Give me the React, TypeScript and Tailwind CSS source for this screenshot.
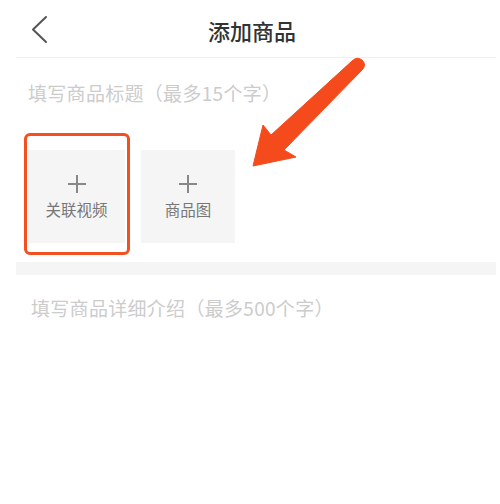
import React from "react";

export default function App() {
  return (
    <div
      className="relative w-[500px] h-[504px] bg-white overflow-hidden"
      style={{ fontFamily: '"Noto Sans CJK SC", "Noto Sans", sans-serif' }}
    >
      {/* header */}
      <div className="relative h-[57px] flex items-center justify-center pt-[3px]">
        <svg
          className="absolute left-[30px] top-[15px]"
          width="20"
          height="30"
          viewBox="0 0 20 30"
          fill="none"
        >
          <polyline
            points="16,2 3,14.5 16,27"
            stroke="#555"
            strokeWidth="2"
            strokeLinecap="round"
            strokeLinejoin="round"
          />
        </svg>
        <div className="pl-[4px] text-[22px] leading-[30px] font-medium text-[#333]">添加商品</div>
      </div>
      <div className="ml-[16px] w-[480px] h-px bg-[#f0f0f0]" />

      {/* title placeholder */}
      <div className="pl-[28px] pt-[22px] text-[19px] tracking-[0.3px] leading-[26px] text-[#cccccc]">
        填写商品标题（最多15个字）
      </div>

      {/* upload boxes */}
      <div className="flex gap-[16px] pl-[28px] mt-[44px]">
        <div className="w-[97px] h-[93px] bg-[#f5f5f5] flex flex-col items-center justify-center">
          <Plus />
          <div className="mt-[5px] text-[15.5px] leading-[20px] text-[#777]">关联视频</div>
        </div>
        <div className="w-[94px] h-[93px] bg-[#f5f5f5] flex flex-col items-center justify-center">
          <Plus />
          <div className="mt-[5px] text-[15.5px] leading-[20px] text-[#777]">商品图</div>
        </div>
      </div>

      {/* separator band */}
      <div className="ml-[16px] w-[480px] h-[13px] mt-[19px] bg-[#f5f5f5]" />

      {/* description placeholder */}
      <div className="pl-[31px] mt-[20px] text-[19px] tracking-[0.3px] leading-[26px] text-[#cccccc]">
        填写商品详细介绍（最多500个字）
      </div>

      {/* annotation: highlight rectangle */}
      <div className="absolute left-[24px] top-[133px] w-[106px] h-[122px] border-[3px] border-[#f2501e] rounded-[6px]" />

      {/* annotation: arrow */}
      <svg className="absolute left-0 top-0" width="500" height="504" viewBox="0 0 500 504">
        <path
          d="M352 61 Q357 56 362 60 Q367 65 362 70 L284 150 L296 157 L253 166 L263 125 L271 135 Z"
          fill="#f54b1c"
          stroke="#f54b1c"
          strokeWidth="1"
          strokeLinejoin="round"
        />
      </svg>
    </div>
  );
}

function Plus() {
  return (
    <svg width="20" height="20" viewBox="0 0 20 20">
      <line x1="10" y1="1" x2="10" y2="19" stroke="#888" strokeWidth="2" />
      <line x1="1" y1="10" x2="19" y2="10" stroke="#888" strokeWidth="2" />
    </svg>
  );
}
